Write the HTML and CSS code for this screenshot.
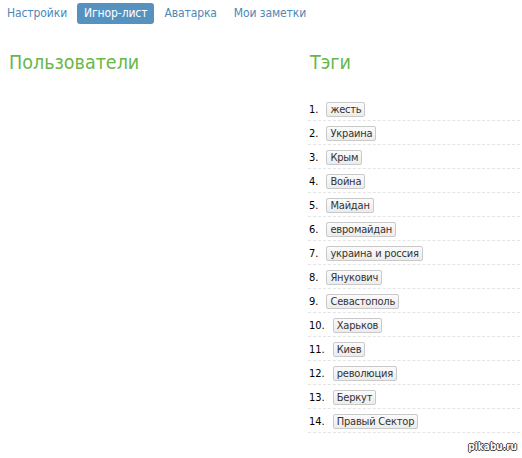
FILE: index.html
```html
<!DOCTYPE html>
<html lang="ru">
<head>
  <meta charset="UTF-8">
  <title>Игнор-лист</title>
  <link rel="stylesheet" href="styles.css">
</head>
<body>

  <!-- Вкладки профиля -->
  <nav class="tabs">
    <a class="tab" href="#">Настройки</a>
    <a class="tab tab-active" href="#">Игнор-лист</a>
    <a class="tab" href="#">Аватарка</a>
    <a class="tab" href="#">Мои заметки</a>
  </nav>

  <div class="columns">
    <section class="col">
      <h2 class="col-title">Пользователи</h2>
    </section>

    <section class="col">
      <h2 class="col-title">Тэги</h2>
      <ol class="tags">
        <li><span class="num">1.</span><span class="tag">жесть</span></li>
        <li><span class="num">2.</span><span class="tag">Украина</span></li>
        <li><span class="num">3.</span><span class="tag">Крым</span></li>
        <li><span class="num">4.</span><span class="tag">Война</span></li>
        <li><span class="num">5.</span><span class="tag">Майдан</span></li>
        <li><span class="num">6.</span><span class="tag">евромайдан</span></li>
        <li><span class="num">7.</span><span class="tag">украина и россия</span></li>
        <li><span class="num">8.</span><span class="tag">Янукович</span></li>
        <li><span class="num">9.</span><span class="tag">Севастополь</span></li>
        <li><span class="num">10.</span><span class="tag">Харьков</span></li>
        <li><span class="num">11.</span><span class="tag">Киев</span></li>
        <li><span class="num">12.</span><span class="tag">революция</span></li>
        <li><span class="num">13.</span><span class="tag">Беркут</span></li>
        <li><span class="num">14.</span><span class="tag">Правый Сектор</span></li>
      </ol>
    </section>
  </div>

  <div class="watermark">pikabu.ru</div>

</body>
</html>
```

FILE: styles.css
```css
body {
  margin: 0;
  background: #fff;
  font-family: "DejaVu Sans Condensed", "DejaVu Sans", sans-serif;
  color: #000;
  position: relative;
  height: 458px;
  overflow: hidden;
}

/* Вкладки */
.tabs {
  display: flex;
  padding: 3px 0 0 0;
}

.tab {
  display: block;
  padding: 0 7px;
  margin-right: 3px;
  line-height: 21px;
  font-size: 12px;
  letter-spacing: -0.1px;
  color: #4d87b6;
  text-decoration: none;
  border-radius: 3px;
}

.tab-active {
  background: #5592bf;
  color: #fff;
}

/* Колонки */
.columns {
  display: grid;
  grid-template-columns: 301px 1fr;
  padding: 0 2px 0 9px;
  margin-top: 27px;
}

.col-title {
  margin: 0;
  font-size: 19.5px;
  line-height: 24px;
  font-weight: normal;
  color: #67b84a;
}

/* Список тэгов */
.tags {
  list-style: none;
  margin: 22px 0 0 -2px;
  padding: 0;
}

.tags li {
  padding: 5px 0 3px 1px;
  border-bottom: 1px dashed #e4e4e4;
  font-size: 11px;
  line-height: 15px;
  display: flex;
  align-items: center;
}

.num {
  margin-right: 8px;
}

.tag {
  display: inline-block;
  padding: 0 3px;
  line-height: 13px;
  letter-spacing: -0.2px;
  border: 1px solid #c9c9c9;
  border-radius: 2px;
  background: linear-gradient(#fbfbfb, #ececec);
  color: #333;
}

.watermark {
  position: absolute;
  right: 5px;
  bottom: 6px;
  font: bold 10px "DejaVu Sans Condensed", "DejaVu Sans", sans-serif;
  color: #fff;
  text-shadow: 1px 0 #444, -1px 0 #444, 0 1px #444, 0 -1px #444;
}
```
